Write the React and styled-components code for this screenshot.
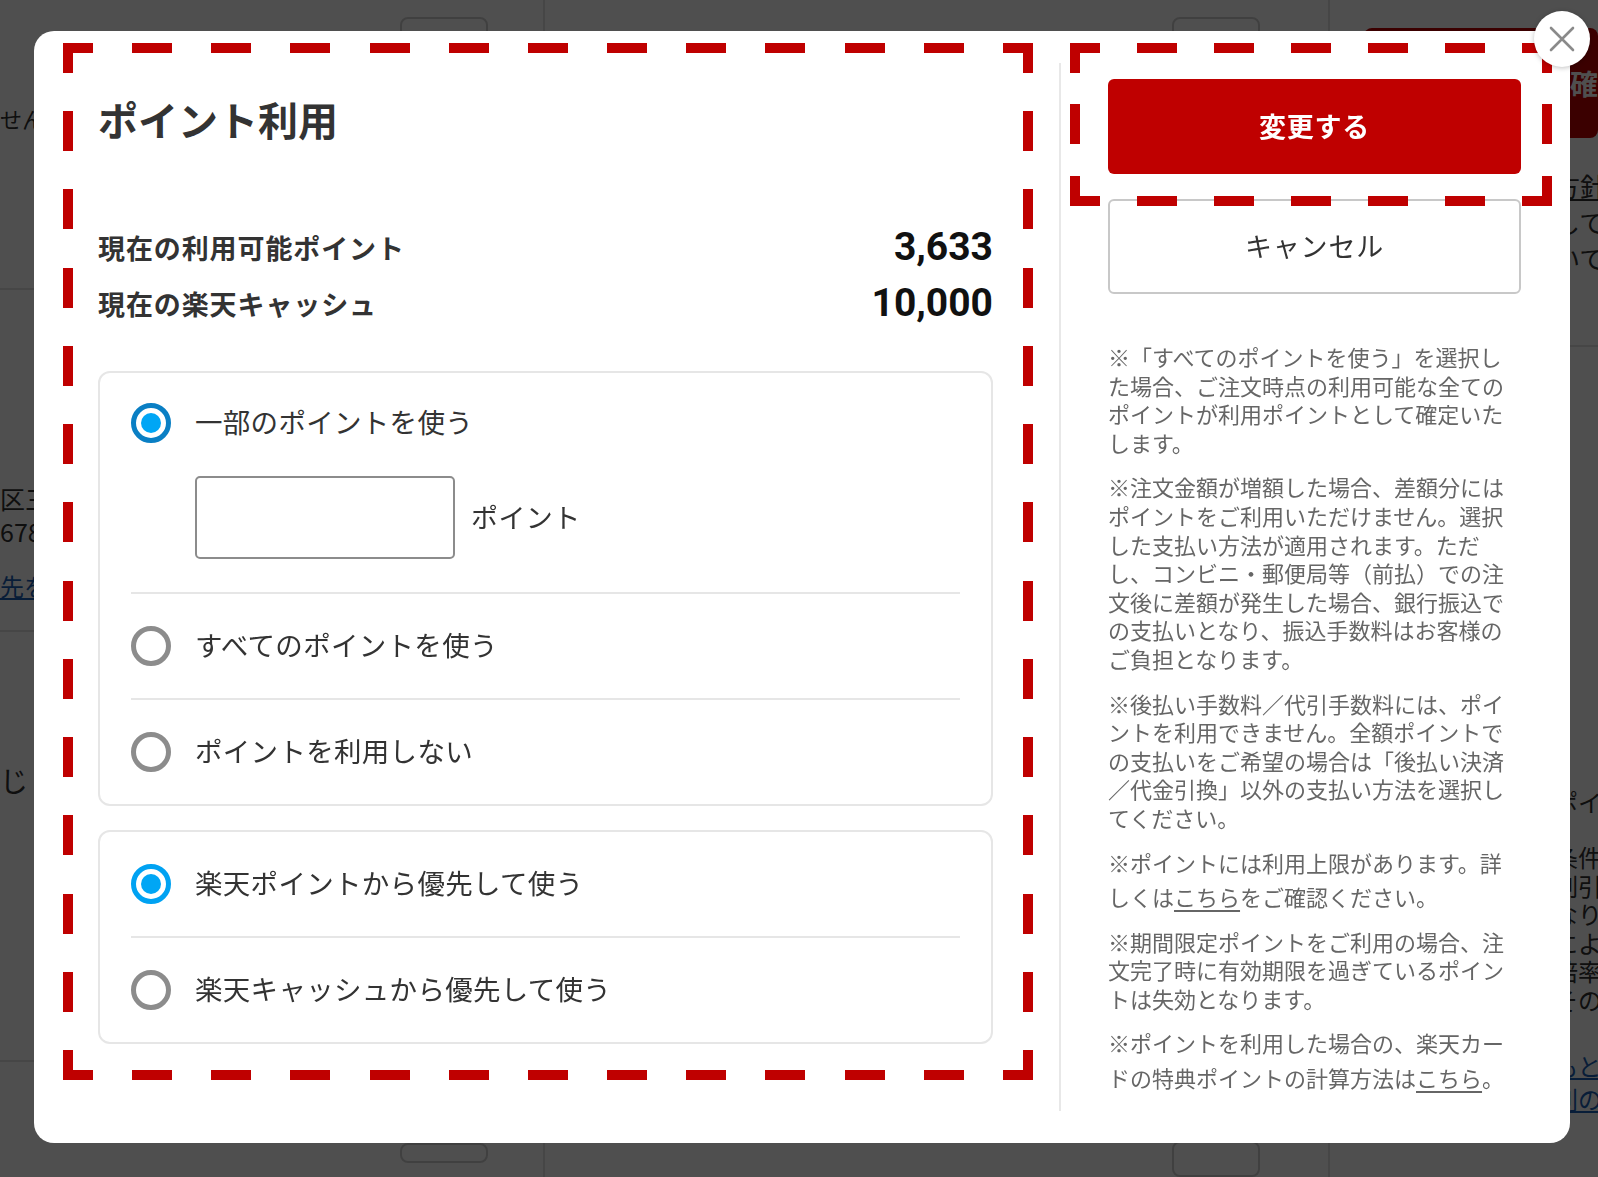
import React from "react";
import styled, { createGlobalStyle } from "styled-components";

const RED = "#bf0000";
const JP = `"Noto Sans CJK JP", "Noto Sans", sans-serif`;

const GlobalStyle = createGlobalStyle`
  html, body {
    margin: 0;
    width: 1598px;
    height: 1177px;
    overflow: hidden;
  }
  body {
    font-family: ${JP};
  }
  * {
    box-sizing: border-box;
  }
`;

/* ---------- page behind the dialog ---------- */

const Page = styled.div`
  width: 1598px;
  height: 1177px;
  display: grid;
  grid-template-columns: 545px 785px 268px;
  background: #fff;
  color: #333;
  overflow: hidden;
`;

const PageCol = styled.div`
  display: flex;
  flex-direction: column;
  border-right: ${(p) => (p.$last ? "none" : "2px solid #e2e2e2")};
  padding-left: ${(p) => p.$pad || 0}px;
`;

const GhostButton = styled.div`
  flex: none;
  width: 88px;
  height: ${(p) => p.$h || 50}px;
  margin-top: ${(p) => p.$top || 0}px;
  margin-left: ${(p) => p.$left || 0}px;
  border: 2px solid #cfcfcf;
  border-radius: 8px;
`;

const PageText = styled.div`
  margin-top: ${(p) => p.$top || 0}px;
  font-size: ${(p) => p.$size || 22}px;
  line-height: ${(p) => p.$lh || 30}px;
  white-space: nowrap;
  color: ${(p) => (p.$link ? "#1a5fb4" : "#333")};
  text-decoration: ${(p) => (p.$link || p.$under ? "underline" : "none")};
`;

const PageRule = styled.div`
  margin-top: ${(p) => p.$top || 0}px;
  height: 2px;
  background: #e2e2e2;
`;

const PageRedButton = styled.div`
  margin: 28px 0 0 34px;
  height: 110px;
  background: ${RED};
  border-radius: 8px;
  color: #fff;
  font-weight: 700;
  font-size: 28px;
  line-height: 110px;
  padding-left: 206px;
  white-space: nowrap;
  overflow: hidden;
`;

const Overlay = styled.div`
  position: fixed;
  inset: 0;
  background: rgba(0, 0, 0, 0.69);
  display: flex;
  align-items: flex-start;
  padding: 31px 0 0 34px;
`;

/* ---------- dialog ---------- */

const Modal = styled.div`
  position: relative;
  width: 1536px;
  height: 1112px;
  background: #fff;
  border-radius: 20px;
  display: flex;
  padding: 32px 0;
  font-family: ${JP};
  color: #333;
`;

const LeftCol = styled.section`
  flex: none;
  width: 1027px;
  padding: 0 66px 0 64px;
  border-right: 2px solid #e8e8e8;
`;

const RightCol = styled.aside`
  flex: 1;
  padding: 16px 49px 0 47px;
`;

const Title = styled.h2`
  margin: 32px 0 0;
  font-size: 40px;
  line-height: 48px;
  font-weight: 700;
  letter-spacing: 0;
  color: #333;
`;

const Summary = styled.dl`
  margin: 76px 0 0;
`;

const SummaryRow = styled.div`
  display: flex;
  align-items: center;
  justify-content: space-between;
  height: 56px;
`;

const SummaryLabel = styled.dt`
  font-size: 27px;
  font-weight: 700;
  letter-spacing: 0.9px;
  color: #333;
`;

const SummaryValue = styled.dd`
  margin: 0;
  font-family: "Roboto", "Liberation Sans", sans-serif;
  font-size: 39px;
  font-weight: 700;
  color: #111;
`;

const Card = styled.div`
  margin-top: ${(p) => p.$top}px;
  border: 2px solid #e6e6e6;
  border-radius: 12px;
  padding: 0 31px;
`;

const Option = styled.div`
  padding: ${(p) => (p.$first ? "26px 0 33px" : "28px 0")};
  border-bottom: 2px solid #e6e6e6;

  &:last-child {
    border-bottom: none;
  }
`;

const OptionRow = styled.label`
  display: flex;
  align-items: center;
  gap: 24px;
  height: 48px;
  cursor: pointer;
`;

const Radio = styled.span`
  position: relative;
  flex: none;
  width: 40px;
  height: 40px;
  border-radius: 50%;
  border: 5px solid
    ${(p) => (p.$checked ? (p.$focus ? "#0a7fc4" : "#00a2f2") : "#8c8c8c")};
  background: #fff;

  &::after {
    content: "";
    display: ${(p) => (p.$checked ? "block" : "none")};
    position: absolute;
    left: 5px;
    top: 5px;
    width: 20px;
    height: 20px;
    border-radius: 50%;
    background: #00a6f5;
  }
`;

const OptionText = styled.span`
  padding-bottom: 4px;
  font-size: 27.5px;
  letter-spacing: 0.3px;
  color: #333;
`;

const InputRow = styled.div`
  display: flex;
  align-items: center;
  gap: 16px;
  margin-top: 29px;
  padding-left: 64px;
`;

const PointInput = styled.input`
  width: 260px;
  height: 83px;
  border: 2px solid #8c8c8c;
  border-radius: 5px;
  padding: 0 14px;
  font-size: 26px;
  outline: none;
`;

const Unit = styled.span`
  padding-bottom: 2px;
  font-size: 27px;
  letter-spacing: 0.4px;
  color: #333;
`;

const PrimaryButton = styled.button`
  display: block;
  width: 100%;
  height: 95px;
  border: none;
  border-radius: 6px;
  background: ${RED};
  color: #fff;
  font-family: ${JP};
  font-size: 27px;
  font-weight: 700;
  letter-spacing: 0.8px;
  padding-bottom: 4px;
  cursor: pointer;
`;

const CancelButton = styled.button`
  display: block;
  width: 100%;
  height: 95px;
  margin-top: 25px;
  border: 2px solid #c8c8c8;
  border-radius: 6px;
  background: #fff;
  color: #333;
  font-family: ${JP};
  font-size: 27px;
  letter-spacing: 0.8px;
  padding-bottom: 4px;
  cursor: pointer;
`;

const Notes = styled.div`
  margin-top: 48px;
  font-size: 22px;
  line-height: 28.6px;
  color: #666;
`;

const Note = styled.p`
  margin: 0 0 16px;
`;

const NoteLink = styled.a`
  display: inline-block;
  padding-top: 6px;
  color: inherit;
  text-decoration: underline;
  text-underline-offset: 4px;
`;

const CloseButton = styled.button`
  position: absolute;
  top: -20px;
  right: -20px;
  width: 56px;
  height: 56px;
  border-radius: 50%;
  border: none;
  background: #fff;
  box-shadow: 0 1px 5px rgba(0, 0, 0, 0.25);
  display: flex;
  align-items: center;
  justify-content: center;
  padding: 0;
  cursor: pointer;
`;

/* dashed annotation frame drawn over the dialog */
const dash = (dir, len) => {
  const n = Math.max(0, Math.round((len - 99) / 79));
  const g = (len - 60 - n * 40) / (n + 1);
  const p = 40 + g;
  return `repeating-linear-gradient(${dir}, ${RED} 0 30px, transparent 30px ${
    30 + g
  }px, ${RED} ${30 + g}px ${p}px)`;
};

const Frame = styled.div`
  position: absolute;
  left: ${(p) => p.$x}px;
  top: ${(p) => p.$y}px;
  width: ${(p) => p.$w}px;
  height: ${(p) => p.$h}px;
  pointer-events: none;
  background: ${(p) => dash("90deg", p.$w)} left top / 100% 10px no-repeat,
    ${(p) => dash("90deg", p.$w)} left bottom / 100% 10px no-repeat,
    ${(p) => dash("180deg", p.$h)} left top / 10px 100% no-repeat,
    ${(p) => dash("180deg", p.$h)} right top / 10px 100% no-repeat;
`;

const CloseIcon = () => (
  <svg width="26" height="26" viewBox="0 0 26 26">
    <path
      d="M2 2 L24 24 M24 2 L2 24"
      stroke="#8a8a8a"
      strokeWidth="2.6"
      strokeLinecap="round"
    />
  </svg>
);

const Backdrop = () => (
  <Page>
    <PageCol>
      <GhostButton $top={17} $left={400} />
      <PageText $top={36}>せん。ご了承ください。</PageText>
      <PageRule $top={155} />
      <PageText $top={192} $size={25} $lh={33}>
        区三田1丁目
      </PageText>
      <PageText $size={25} $lh={33}>
        678-9012
      </PageText>
      <PageText $top={18} $size={24} $lh={40} $link>
        先を変更
      </PageText>
      <PageRule $top={24} />
      <PageText $top={128} $size={28} $lh={40}>
        じ
      </PageText>
      <PageRule $top={260} />
      <GhostButton $top={81} $left={400} $h={20} />
    </PageCol>
    <PageCol>
      <GhostButton $top={17} $left={627} />
      <div style={{ flex: 1 }} />
      <GhostButton $left={627} $h={36} />
    </PageCol>
    <PageCol $last>
      <PageRedButton>確定する</PageRedButton>
      <PageCol $last $pad={224}>
        <PageText $top={30} $size={26} $lh={36} $under>
          方針
        </PageText>
        <PageText $size={26} $lh={36}>
          して
        </PageText>
        <PageText $size={26} $lh={36}>
          いて
        </PageText>
        <PageRule $top={69} />
        <PageText $top={440} $size={24} $lh={30}>
          ポイン
        </PageText>
        <PageText $top={26} $size={24} $lh={28.6}>
          条件を
        </PageText>
        <PageText $size={24} $lh={28.6}>
          割引き
        </PageText>
        <PageText $size={24} $lh={28.6}>
          なりま
        </PageText>
        <PageText $size={24} $lh={28.6}>
          により
        </PageText>
        <PageText $size={24} $lh={28.6}>
          倍率と
        </PageText>
        <PageText $size={24} $lh={28.6}>
          その場
        </PageText>
        <PageText $top={34} $size={24} $lh={33} $link>
          もとづ
        </PageText>
        <PageText $size={24} $lh={33} $link>
          別の注
        </PageText>
      </PageCol>
    </PageCol>
  </Page>
);

const PointOption = ({ label, checked, focus, first, children }) => (
  <Option $first={first}>
    <OptionRow>
      <Radio $checked={checked} $focus={focus} />
      <OptionText>{label}</OptionText>
    </OptionRow>
    {children}
  </Option>
);

const App = () => {
  return (
    <>
      <GlobalStyle />
      <Backdrop />
      <Overlay>
        <Modal lang="ja">
          <LeftCol>
            <Title>ポイント利用</Title>
            <Summary>
              <SummaryRow>
                <SummaryLabel>現在の利用可能ポイント</SummaryLabel>
                <SummaryValue>3,633</SummaryValue>
              </SummaryRow>
              <SummaryRow>
                <SummaryLabel>現在の楽天キャッシュ</SummaryLabel>
                <SummaryValue>10,000</SummaryValue>
              </SummaryRow>
            </Summary>

            <Card $top={40}>
              <PointOption label="一部のポイントを使う" checked focus first>
                <InputRow>
                  <PointInput type="text" />
                  <Unit>ポイント</Unit>
                </InputRow>
              </PointOption>
              <PointOption label="すべてのポイントを使う" />
              <PointOption label="ポイントを利用しない" />
            </Card>

            <Card $top={24}>
              <PointOption label="楽天ポイントから優先して使う" checked />
              <PointOption label="楽天キャッシュから優先して使う" />
            </Card>
          </LeftCol>

          <RightCol>
            <PrimaryButton>変更する</PrimaryButton>
            <CancelButton>キャンセル</CancelButton>
            <Notes>
              <Note>
                ※「すべてのポイントを使う」を選択した場合、ご注文時点の利用可能な全てのポイントが利用ポイントとして確定いたします。
              </Note>
              <Note>
                ※注文金額が増額した場合、差額分にはポイントをご利用いただけません。選択した支払い方法が適用されます。ただし、コンビニ・郵便局等（前払）での注文後に差額が発生した場合、銀行振込での支払いとなり、振込手数料はお客様のご負担となります。
              </Note>
              <Note>
                ※後払い手数料／代引手数料には、ポイントを利用できません。全額ポイントでの支払いをご希望の場合は「後払い決済／代金引換」以外の支払い方法を選択してください。
              </Note>
              <Note>
                ※ポイントには利用上限があります。詳しくは
                <NoteLink href="#">こちら</NoteLink>
                をご確認ください。
              </Note>
              <Note>
                ※期間限定ポイントをご利用の場合、注文完了時に有効期限を過ぎているポイントは失効となります。
              </Note>
              <Note>
                ※ポイントを利用した場合の、楽天カードの特典ポイントの計算方法は
                <NoteLink href="#">こちら</NoteLink>。
              </Note>
            </Notes>
          </RightCol>

          <Frame $x={29} $y={12} $w={970} $h={1037} />
          <Frame $x={1036} $y={12} $w={482} $h={163} />

          <CloseButton aria-label="閉じる">
            <CloseIcon />
          </CloseButton>
        </Modal>
      </Overlay>
    </>
  );
};

export default App;
